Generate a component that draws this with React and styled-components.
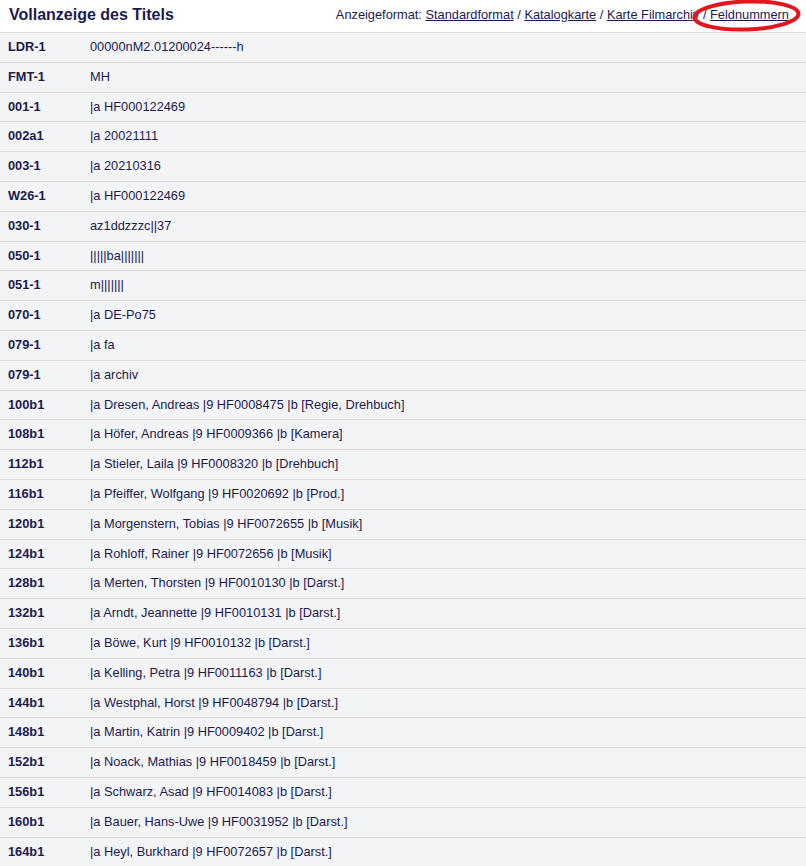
import React from "react";
import styled, { createGlobalStyle } from "styled-components";

const rows = [
  ["LDR-1", "00000nM2.01200024------h"],
  ["FMT-1", "MH"],
  ["001-1", "|a HF000122469"],
  ["002a1", "|a 20021111"],
  ["003-1", "|a 20210316"],
  ["W26-1", "|a HF000122469"],
  ["030-1", "az1ddzzzc||37"],
  ["050-1", "|||||ba|||||||"],
  ["051-1", "m|||||||"],
  ["070-1", "|a DE-Po75"],
  ["079-1", "|a fa"],
  ["079-1", "|a archiv"],
  ["100b1", "|a Dresen, Andreas |9 HF0008475 |b [Regie, Drehbuch]"],
  ["108b1", "|a Höfer, Andreas |9 HF0009366 |b [Kamera]"],
  ["112b1", "|a Stieler, Laila |9 HF0008320 |b [Drehbuch]"],
  ["116b1", "|a Pfeiffer, Wolfgang |9 HF0020692 |b [Prod.]"],
  ["120b1", "|a Morgenstern, Tobias |9 HF0072655 |b [Musik]"],
  ["124b1", "|a Rohloff, Rainer |9 HF0072656 |b [Musik]"],
  ["128b1", "|a Merten, Thorsten |9 HF0010130 |b [Darst.]"],
  ["132b1", "|a Arndt, Jeannette |9 HF0010131 |b [Darst.]"],
  ["136b1", "|a Böwe, Kurt |9 HF0010132 |b [Darst.]"],
  ["140b1", "|a Kelling, Petra |9 HF0011163 |b [Darst.]"],
  ["144b1", "|a Westphal, Horst |9 HF0048794 |b [Darst.]"],
  ["148b1", "|a Martin, Katrin |9 HF0009402 |b [Darst.]"],
  ["152b1", "|a Noack, Mathias |9 HF0018459 |b [Darst.]"],
  ["156b1", "|a Schwarz, Asad |9 HF0014083 |b [Darst.]"],
  ["160b1", "|a Bauer, Hans-Uwe |9 HF0031952 |b [Darst.]"],
  ["164b1", "|a Heyl, Burkhard |9 HF0072657 |b [Darst.]"],
];

const formats = ["Standardformat", "Katalogkarte", "Karte Filmarchiv", "Feldnummern"];

const GlobalStyle = createGlobalStyle`
  body {
    margin: 0;
    background: #fff;
    font-family: "Liberation Sans", Arial, sans-serif;
    color: #1c1b4d;
  }
`;

const Page = styled.div`
  width: 806px;
  overflow: hidden;
`;

const Header = styled.div`
  position: relative;
  display: flex;
  align-items: center;
  justify-content: space-between;
  height: 29px;
  padding: 0 17px 3px 9px;
  border-bottom: 1px solid #dcdde0;
  background: #fff;
`;

const Title = styled.h1`
  margin: 0;
  font-size: 16px;
  font-weight: bold;
  color: #1c1b4d;
`;

const FormatBar = styled.div`
  font-size: 12.8px;
  color: #1c1b4d;
`;

const FormatLink = styled.a`
  color: #1c1b4d;
  text-decoration: underline;
  cursor: pointer;
`;

// red hand-drawn highlight around the active format
const Marker = styled.svg`
  position: absolute;
  left: 688px;
  top: 0;
  width: 116px;
  height: 34px;
  pointer-events: none;
`;

const Table = styled.div`
  background: #f3f4f6;
`;

const Row = styled.div`
  display: grid;
  grid-template-columns: 82px 1fr;
  padding: 7px 0 7px 8px;
  line-height: 14.8px;
  font-size: 12.8px;
  border-bottom: 1px solid #dcdde0;
`;

const Field = styled.div`
  font-weight: bold;
`;

const Value = styled.div`
  white-space: pre;
`;

export default function App() {
  return (
    <Page>
      <GlobalStyle />
      <Header>
        <Title>Vollanzeige des Titels</Title>
        <FormatBar>
          Anzeigeformat:{" "}
          {formats.map((f, i) => (
            <React.Fragment key={f}>
              <FormatLink>{f}</FormatLink>
              {i < formats.length - 1 ? " / " : ""}
            </React.Fragment>
          ))}
        </FormatBar>
        <Marker viewBox="0 0 116 34">
          <ellipse
            cx="58.5"
            cy="15.5"
            rx="52"
            ry="14"
            fill="none"
            stroke="#e3161e"
            strokeWidth="4"
            transform="rotate(-2 58.5 15.5)"
          />
        </Marker>
      </Header>
      <Table>
        {rows.map(([tag, val], i) => (
          <Row key={i}>
            <Field>{tag}</Field>
            <Value>{val}</Value>
          </Row>
        ))}
      </Table>
    </Page>
  );
}
